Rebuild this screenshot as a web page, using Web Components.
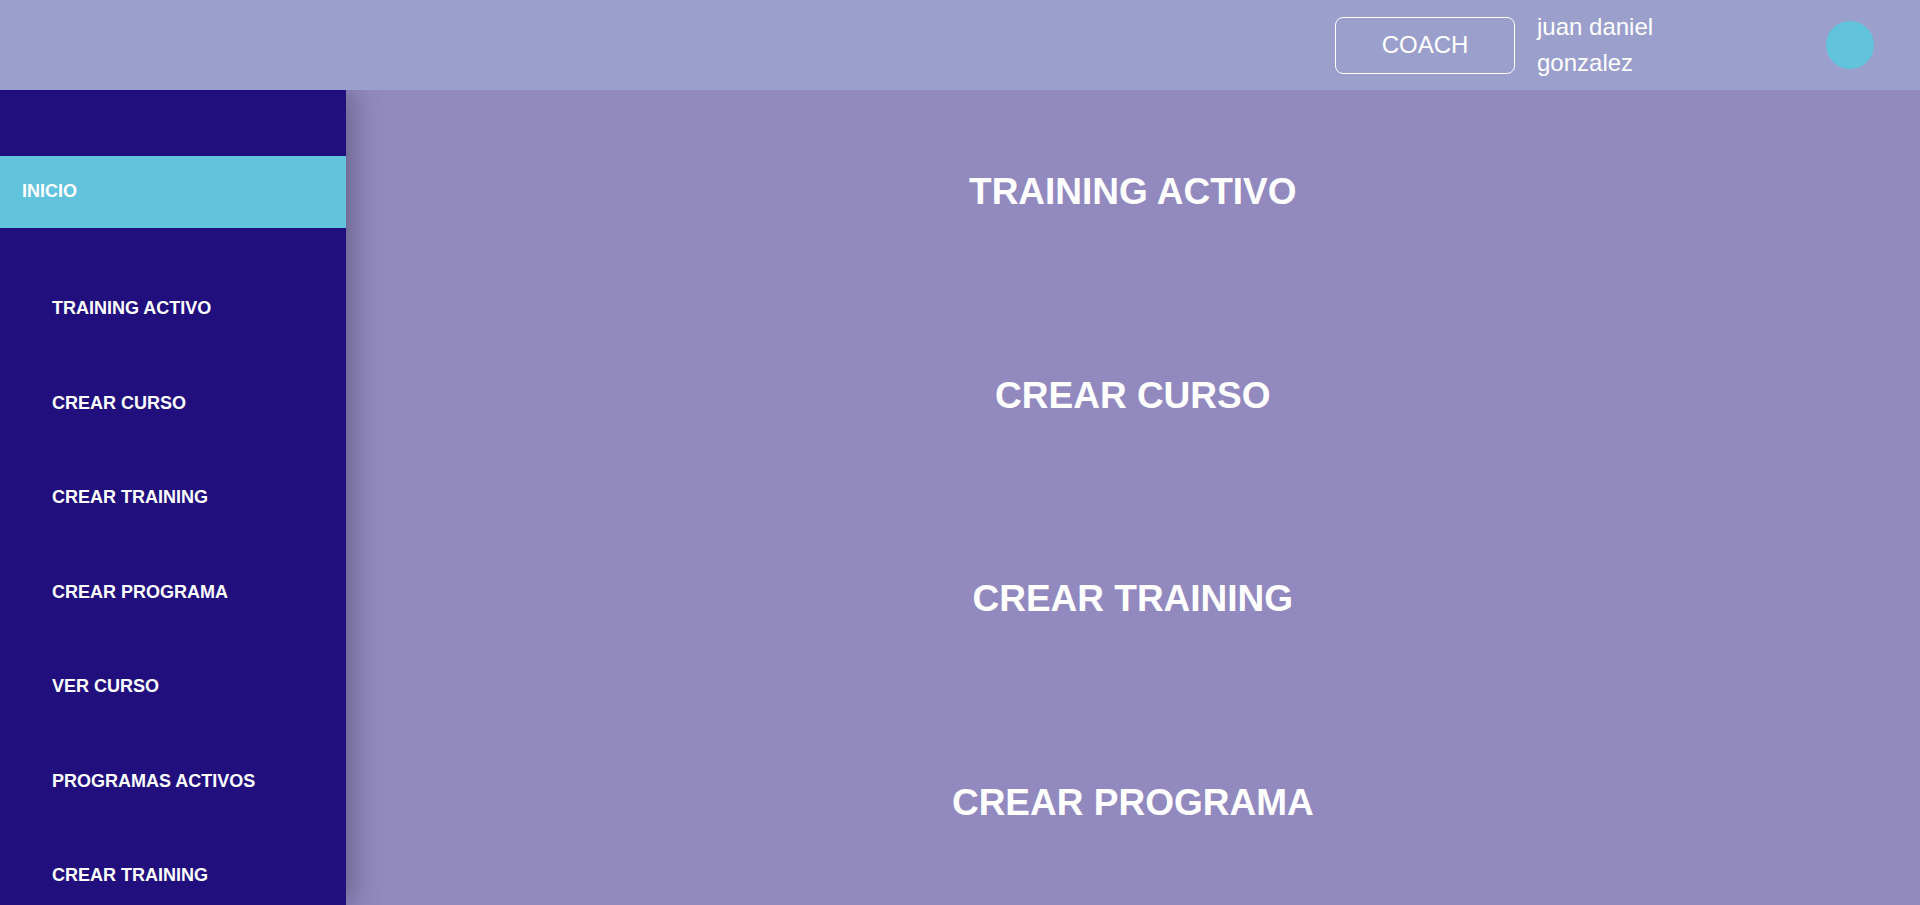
<!DOCTYPE html>
<html lang="es">
<head>
<meta charset="utf-8">
<title>Coach</title>
<style>
  body { margin: 0; font-family: Arial, "Liberation Sans", sans-serif; color: #fff; }
</style>
</head>
<body>
<coach-app>
  <coach-header slot="header" role-name="COACH">juan daniel gonzalez</coach-header>
  <coach-sidebar slot="sidebar">
    <nav-link active href="#inicio">INICIO</nav-link>
    <nav-link slot="items" href="#training-activo">TRAINING ACTIVO</nav-link>
    <nav-link slot="items" href="#crear-curso">CREAR CURSO</nav-link>
    <nav-link slot="items" href="#crear-training">CREAR TRAINING</nav-link>
    <nav-link slot="items" href="#crear-programa">CREAR PROGRAMA</nav-link>
    <nav-link slot="items" href="#ver-curso">VER CURSO</nav-link>
    <nav-link slot="items" href="#programas-activos">PROGRAMAS ACTIVOS</nav-link>
    <nav-link slot="items" href="#crear-training-2">CREAR TRAINING</nav-link>
  </coach-sidebar>
  <section-title>TRAINING ACTIVO</section-title>
  <section-title>CREAR CURSO</section-title>
  <section-title>CREAR TRAINING</section-title>
  <section-title>CREAR PROGRAMA</section-title>
</coach-app>
<script>
  class BaseElement extends HTMLElement {
    constructor() {
      super();
      this.attachShadow({ mode: 'open' }).innerHTML = this.constructor.markup;
    }
  }

  customElements.define('coach-app', class extends BaseElement {
    static markup = `
      <style>
        :host { display: grid; grid-template: auto 1fr / 18% 1fr; min-height: 100vh; background: #9289bf; }
        .top { grid-column: 1 / -1; z-index: 2; }
        .side { display: grid; z-index: 1; }
        main { display: grid; grid-auto-rows: 1fr; }
      </style>
      <div class="top"><slot name="header"></slot></div>
      <div class="side"><slot name="sidebar"></slot></div>
      <main><slot></slot></main>`;
  });

  customElements.define('coach-header', class extends BaseElement {
    static markup = `
      <style>
        :host { display: block; background: #9b9fcb; font-size: 24px; line-height: 36px; }
        header { display: flex; align-items: center; justify-content: flex-end; min-height: 90px; padding-right: 46px; box-sizing: border-box; }
        button { font: inherit; color: inherit; width: 180px; height: 57px; padding: 0; background: none; border: 1px solid #fff; border-radius: 8px; }
        .name { width: 144px; margin: 0 145px 0 22px; }
        .avatar { width: 48px; height: 48px; border-radius: 50%; background: #61c3dc; }
      </style>
      <header>
        <button type="button"></button>
        <div class="name"><slot></slot></div>
        <div class="avatar"></div>
      </header>`;
    connectedCallback() {
      this.shadowRoot.querySelector('button').textContent = this.getAttribute('role-name');
    }
  });

  customElements.define('coach-sidebar', class extends BaseElement {
    static markup = `
      <style>
        :host { display: flex; flex-direction: column; background: #200f7d; box-shadow: 6px 0 28px rgba(0, 0, 0, .3); }
        .home { margin: 66px 0; }
        nav { flex: 1; display: flex; flex-direction: column; justify-content: space-between; gap: 24px; padding: 1px 0 16px 30px; }
      </style>
      <div class="home"><slot></slot></div>
      <nav><slot name="items"></slot></nav>`;
  });

  customElements.define('nav-link', class extends BaseElement {
    static markup = `
      <style>
        :host { display: block; font-size: 18px; font-weight: bold; line-height: 27px; padding: 0 22px; }
        :host([active]) { background: #61c3dc; padding: 22px 22px 23px; }
        a { color: inherit; text-decoration: none; display: block; }
      </style>
      <a><slot></slot></a>`;
    connectedCallback() {
      this.shadowRoot.querySelector('a').href = this.getAttribute('href');
    }
  });

  customElements.define('section-title', class extends BaseElement {
    static markup = `
      <style>
        :host { display: grid; place-items: center; }
        h2 { margin: 0; font-size: 37px; line-height: 48px; }
      </style>
      <h2><slot></slot></h2>`;
  });
</script>
</body>
</html>
